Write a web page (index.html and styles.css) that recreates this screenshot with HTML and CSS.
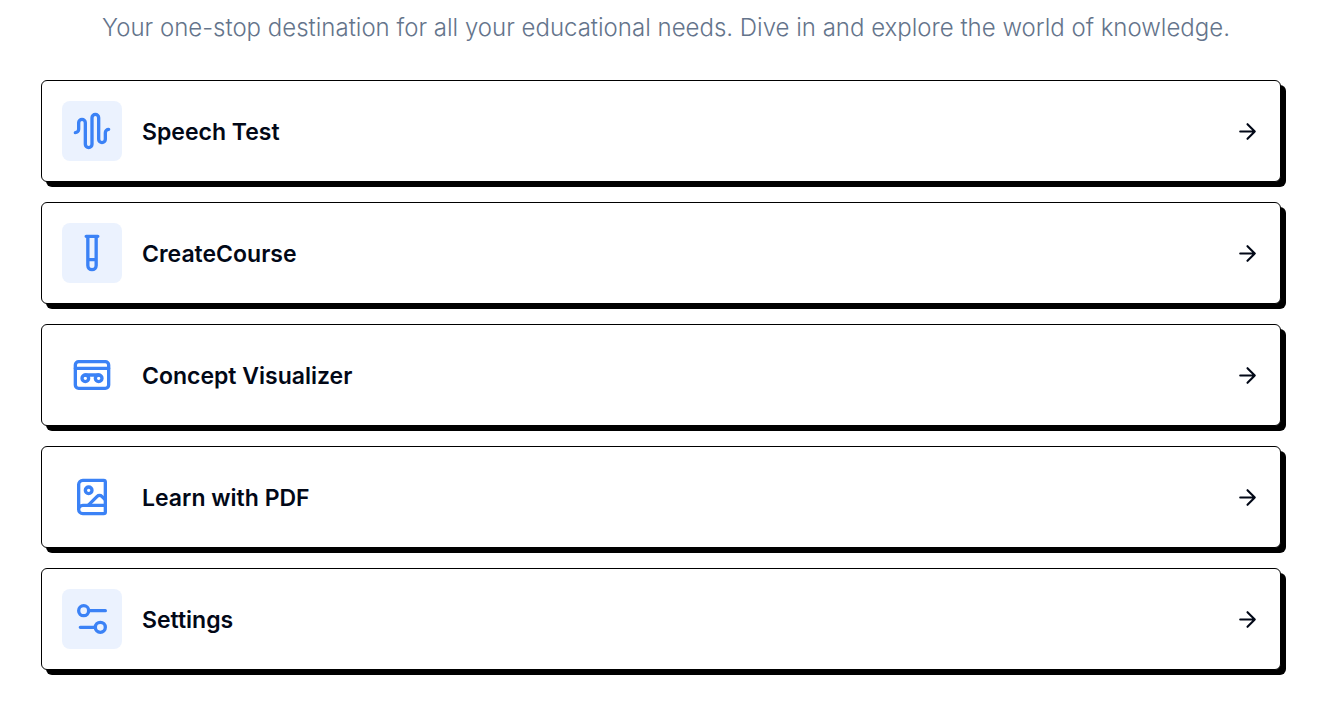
FILE: index.html
```html
<!DOCTYPE html>
<html lang="en">
<head>
<meta charset="utf-8">
<meta name="viewport" content="width=device-width, initial-scale=1">
<title>Learning tools</title>
<link rel="stylesheet" href="styles.css">
</head>
<body>
<main class="page">
  <p class="intro">Your one-stop destination for all your educational needs. Dive in and explore the world of knowledge.</p>
  <nav class="cards" aria-label="Tools">
    <a class="card" href="#speech-test">
      <span class="badge badge-tinted"><svg class="icon" viewBox="0 0 24 24" aria-hidden="true"><path d="M2 13a2 2 0 0 0 2-2V7a2 2 0 0 1 4 0v13a2 2 0 0 0 4 0V4a2 2 0 0 1 4 0v13a2 2 0 0 0 4 0v-4a2 2 0 0 1 2-2"/></svg></span>
      <span class="label">Speech Test</span>
      <svg class="arrow" viewBox="0 0 24 24" aria-hidden="true"><path d="M5 12h14M12 5l7 7-7 7"/></svg>
    </a>
    <a class="card" href="#create-course">
      <span class="badge badge-tinted"><svg class="icon" viewBox="0 0 24 24" aria-hidden="true"><path d="M14.5 2v17.5c0 1.4-1.1 2.5-2.5 2.5s-2.5-1.1-2.5-2.5V2M8.5 2h7M14.5 16h-5"/></svg></span>
      <span class="label">CreateCourse</span>
      <svg class="arrow" viewBox="0 0 24 24" aria-hidden="true"><path d="M5 12h14M12 5l7 7-7 7"/></svg>
    </a>
    <a class="card" href="#concept-visualizer">
      <span class="badge"><svg class="icon" viewBox="0 0 24 24" aria-hidden="true"><rect width="20" height="16" x="2" y="4" rx="2"/><path d="M2 8h20M8 12h8"/><circle cx="8" cy="14" r="2"/><circle cx="16" cy="14" r="2"/></svg></span>
      <span class="label">Concept Visualizer</span>
      <svg class="arrow" viewBox="0 0 24 24" aria-hidden="true"><path d="M5 12h14M12 5l7 7-7 7"/></svg>
    </a>
    <a class="card" href="#learn-with-pdf">
      <span class="badge"><svg class="icon" viewBox="0 0 24 24" aria-hidden="true"><path d="m20 13.7-2.1-2.1a2 2 0 0 0-2.8 0L9.7 17"/><path d="M4 19.5v-15A2.5 2.5 0 0 1 6.5 2H19a1 1 0 0 1 1 1v18a1 1 0 0 1-1 1H6.5a2.5 2.5 0 0 1 0-5H20"/><circle cx="10" cy="8" r="2"/></svg></span>
      <span class="label">Learn with PDF</span>
      <svg class="arrow" viewBox="0 0 24 24" aria-hidden="true"><path d="M5 12h14M12 5l7 7-7 7"/></svg>
    </a>
    <a class="card" href="#settings">
      <span class="badge badge-tinted"><svg class="icon" viewBox="0 0 24 24" aria-hidden="true"><path d="M20 7h-9M14 17H5"/><circle cx="17" cy="17" r="3"/><circle cx="7" cy="7" r="3"/></svg></span>
      <span class="label">Settings</span>
      <svg class="arrow" viewBox="0 0 24 24" aria-hidden="true"><path d="M5 12h14M12 5l7 7-7 7"/></svg>
    </a>
  </nav>
</main>
</body>
</html>
```
FILE: styles.css
```css
* {
  box-sizing: border-box;
}

body {
  margin: 0;
  background: #fff;
  color: #020817;
  font-family: Inter, "Liberation Sans", sans-serif;
}

.page {
  padding: 12px 8px 44px 0;
}

.intro {
  margin: 0;
  color: #64748b;
  font-size: 24px;
  font-weight: 300;
  line-height: 32px;
  text-align: center;
}

.cards {
  display: grid;
  gap: 20px;
  padding: 36px 51px 0 41px;
}

.card {
  display: flex;
  align-items: center;
  gap: 20px;
  padding: 20px;
  border: 1px solid #000;
  border-radius: 6px;
  background: #fff;
  box-shadow: 5px 5px 0 #000;
  color: inherit;
  text-decoration: none;
}

.badge {
  display: flex;
  padding: 10px;
  border-radius: 8px;
  color: #3b82f6;
}

.badge-tinted {
  background: #ebf2fe;
}

.icon,
.arrow {
  fill: none;
  stroke: currentColor;
  stroke-width: 2;
  stroke-linecap: round;
  stroke-linejoin: round;
}

.icon {
  width: 40px;
  height: 40px;
}

.arrow {
  width: 25px;
  height: 25px;
}

.label {
  flex: 1;
  padding-top: 2px;
  font-size: 23px;
  font-weight: 600;
  line-height: 32px;
}
```
